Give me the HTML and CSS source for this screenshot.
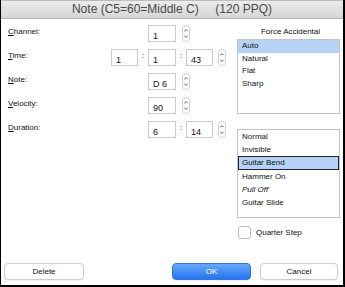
FILE: index.html
```html
<!DOCTYPE html>
<html>
<head>
  <meta charset="utf-8">
  <title>Note</title>
  <link rel="stylesheet" href="styles.css">
</head>
<body>
  <div class="window">
    <div class="titlebar">Note (C5=60=Middle C)     (120 PPQ)</div>

    <div class="content">
      <div class="fields">
        <div class="row">
          <div class="label"><u>C</u>hannel:</div>
          <div class="ctrls indent">
            <div class="box">1</div>
            <svg class="spin" width="8" height="17" viewBox="0 0 8 17"><rect x="0.5" y="0.5" width="7" height="16" rx="3.5" fill="#fff" stroke="#cfcfcf"/><path d="M2.4 6.2 L4 4.6 L5.6 6.2" fill="none" stroke="#444" stroke-width="0.9"/><path d="M2.4 10.8 L4 12.4 L5.6 10.8" fill="none" stroke="#444" stroke-width="0.9"/></svg>
          </div>
        </div>
        <div class="row">
          <div class="label"><u>T</u>ime:</div>
          <div class="ctrls">
            <div class="box narrow">1</div>
            <span class="colon">:</span>
            <div class="box">1</div>
            <span class="colon">:</span>
            <div class="box narrow">43</div>
            <svg class="spin tight" width="8" height="17" viewBox="0 0 8 17"><rect x="0.5" y="0.5" width="7" height="16" rx="3.5" fill="#fff" stroke="#cfcfcf"/><path d="M2.4 6.2 L4 4.6 L5.6 6.2" fill="none" stroke="#444" stroke-width="0.9"/><path d="M2.4 10.8 L4 12.4 L5.6 10.8" fill="none" stroke="#444" stroke-width="0.9"/></svg>
          </div>
        </div>
        <div class="row">
          <div class="label"><u>N</u>ote:</div>
          <div class="ctrls indent">
            <div class="box">D 6</div>
            <svg class="spin" width="8" height="17" viewBox="0 0 8 17"><rect x="0.5" y="0.5" width="7" height="16" rx="3.5" fill="#fff" stroke="#cfcfcf"/><path d="M2.4 6.2 L4 4.6 L5.6 6.2" fill="none" stroke="#444" stroke-width="0.9"/><path d="M2.4 10.8 L4 12.4 L5.6 10.8" fill="none" stroke="#444" stroke-width="0.9"/></svg>
          </div>
        </div>
        <div class="row">
          <div class="label"><u>V</u>elocity:</div>
          <div class="ctrls indent">
            <div class="box">90</div>
            <svg class="spin" width="8" height="17" viewBox="0 0 8 17"><rect x="0.5" y="0.5" width="7" height="16" rx="3.5" fill="#fff" stroke="#cfcfcf"/><path d="M2.4 6.2 L4 4.6 L5.6 6.2" fill="none" stroke="#444" stroke-width="0.9"/><path d="M2.4 10.8 L4 12.4 L5.6 10.8" fill="none" stroke="#444" stroke-width="0.9"/></svg>
          </div>
        </div>
        <div class="row">
          <div class="label"><u>D</u>uration:</div>
          <div class="ctrls indent">
            <div class="box">6</div>
            <span class="colon">:</span>
            <div class="box narrow">14</div>
            <svg class="spin tight" width="8" height="17" viewBox="0 0 8 17"><rect x="0.5" y="0.5" width="7" height="16" rx="3.5" fill="#fff" stroke="#cfcfcf"/><path d="M2.4 6.2 L4 4.6 L5.6 6.2" fill="none" stroke="#444" stroke-width="0.9"/><path d="M2.4 10.8 L4 12.4 L5.6 10.8" fill="none" stroke="#444" stroke-width="0.9"/></svg>
          </div>
        </div>
      </div>

      <div class="side">
        <div class="group-title">Force Accidental</div>
        <ul class="list list-acc">
          <li class="sel">Auto</li>
          <li>Natural</li>
          <li>Flat</li>
          <li>Sharp</li>
        </ul>
        <ul class="list list-type">
          <li>Normal</li>
          <li>Invisible</li>
          <li class="sel focus">Guitar Bend</li>
          <li>Hammer On</li>
          <li class="italic">Pull Off</li>
          <li>Guitar Slide</li>
        </ul>
        <div class="check">
          <span class="checkbox"></span>
          <span>Quarter Step</span>
        </div>
      </div>
    </div>

    <div class="buttons">
      <button class="btn btn-delete">Delete</button>
      <button class="btn btn-ok">OK</button>
      <button class="btn btn-cancel">Cancel</button>
    </div>
  </div>
</body>
</html>
```

FILE: styles.css
```css
body {
  margin: 0;
  padding: 0;
  background: #fff;
  font-family: "Liberation Sans", Arial, Helvetica, sans-serif;
  color: #111;
}
.window {
  width: 345px;
  height: 287px;
  box-sizing: border-box;
  border-left: 1px solid #000;
  border-right: 2px solid #000;
  border-bottom: 2px solid #000;
  background: #fff;
  display: flex;
  flex-direction: column;
}
.titlebar {
  height: 19px;
  box-sizing: border-box;
  border-top: 1px solid #bdbdbd;
  border-bottom: 1px solid #b3b3b3;
  background: linear-gradient(#ececec, #d6d6d6);
  color: #4a4a4a;
  font-size: 12px;
  line-height: 17px;
  text-align: center;
  white-space: pre;
}
.content {
  flex: 1;
  display: flex;
  justify-content: space-between;
  padding: 6px 3px 0 7px;
}
.fields {
  display: flex;
  flex-direction: column;
  gap: 7px;
}
.row {
  display: flex;
  height: 17px;
}
.label {
  width: 103px;
  font-size: 8px;
  line-height: 10px;
  margin-top: 2px;
}
.ctrls {
  display: flex;
  align-items: flex-start;
}
.ctrls.indent {
  padding-left: 37px;
}
.box {
  width: 28px;
  height: 17px;
  box-sizing: border-box;
  border: 1px solid #cacaca;
  background: #fff;
  font-size: 9px;
  line-height: 10px;
  padding: 5px 0 0 4px;
}
.box.narrow {
  width: 27px;
}
.colon {
  width: 10px;
  text-align: center;
  font-size: 8px;
  line-height: 10px;
  margin-top: 2px;
}
.spin {
  display: block;
  margin-left: 6px;
}
.spin.tight {
  margin-left: 5px;
}
.side {
  width: 103px;
  display: flex;
  flex-direction: column;
}
.group-title {
  font-size: 8px;
  line-height: 10px;
  text-align: center;
  margin-top: 2px;
  padding-left: 4px;
}
.list {
  list-style: none;
  margin: 2px 0 0;
  padding: 0;
  border: 1px solid #c4c4c4;
  background: #fff;
  box-sizing: border-box;
  font-size: 8px;
}
.list li {
  padding-left: 4px;
  box-sizing: border-box;
}
.list-acc {
  height: 75px;
}
.list-acc li {
  height: 12.6px;
  line-height: 12.6px;
}
.list-type {
  height: 89px;
  margin-top: 15px;
}
.list-type li {
  height: 13.2px;
  line-height: 13.2px;
}
.list li.sel {
  background: #b6d2f4;
}
.list li.focus {
  border: 1px solid #1d2536;
  line-height: 11.2px;
  padding-left: 3px;
}
.list li.italic {
  font-style: italic;
}
.check {
  display: flex;
  align-items: center;
  gap: 5px;
  margin-top: 8px;
  padding-left: 1px;
  font-size: 8px;
}
.checkbox {
  width: 13px;
  height: 13px;
  box-sizing: border-box;
  border: 1px solid #bdbdbd;
  border-radius: 3px;
  background: #fff;
}
.buttons {
  display: flex;
  padding: 0 5px 5px 3px;
}
.btn {
  height: 17px;
  box-sizing: border-box;
  border: 1px solid #cdcdcd;
  border-radius: 4px;
  background: #fff;
  box-shadow: 0 1px 0 rgba(0, 0, 0, 0.06);
  font-family: "Liberation Sans", Arial, sans-serif;
  font-size: 8px;
  color: #111;
  padding: 0;
}
.btn-delete {
  width: 80px;
}
.btn-ok {
  width: 79px;
  margin-left: auto;
  border: 1px solid #2f76e4;
  background: linear-gradient(#66aaf9, #2673f0);
  color: #fff;
}
.btn-cancel {
  width: 78px;
  margin-left: 9px;
}
```
